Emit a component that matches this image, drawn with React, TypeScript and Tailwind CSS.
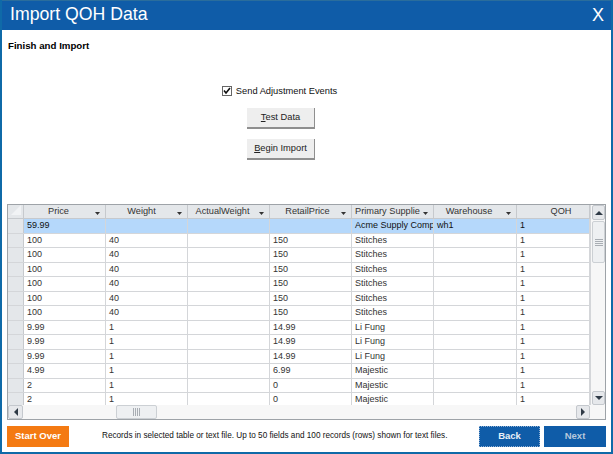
const columns = [
  { label: "Price", width: "w-[82px]", pad: "pr-[12px]", arrow: true },
  { label: "Weight", width: "w-[82px]", pad: "pr-[10px]", arrow: true },
  { label: "ActualWeight", width: "w-[82px]", pad: "pr-[12px]", arrow: true },
  { label: "RetailPrice", width: "w-[82px]", pad: "pr-[6px]", arrow: true },
  { label: "Primary Supplie", width: "w-[82px]", pad: "pr-[10px]", arrow: true },
  { label: "Warehouse", width: "w-[83px]", pad: "pr-[12px]", arrow: true },
  { label: "QOH", width: "w-[73px]", pad: "pl-[16px]", arrow: false },
];

const rows = [
  ["59.99", "", "", "", "Acme Supply Company", "wh1", "1"],
  ["100", "40", "", "150", "Stitches", "", "1"],
  ["100", "40", "", "150", "Stitches", "", "1"],
  ["100", "40", "", "150", "Stitches", "", "1"],
  ["100", "40", "", "150", "Stitches", "", "1"],
  ["100", "40", "", "150", "Stitches", "", "1"],
  ["100", "40", "", "150", "Stitches", "", "1"],
  ["9.99", "1", "", "14.99", "Li Fung", "", "1"],
  ["9.99", "1", "", "14.99", "Li Fung", "", "1"],
  ["9.99", "1", "", "14.99", "Li Fung", "", "1"],
  ["4.99", "1", "", "6.99", "Majestic", "", "1"],
  ["2", "1", "", "0", "Majestic", "", "1"],
  ["2", "1", "", "0", "Majestic", "", "1"],
];

function Caret() {
  return (
    <svg width="5" height="3" viewBox="0 0 5 3" className="absolute right-[5px] top-[7px]">
      <path d="M0 0h5L2.5 3z" fill="#333" />
    </svg>
  );
}

function ScrollButton({ dir, className }: { dir: "up" | "down" | "left" | "right"; className: string }) {
  const paths = {
    up: "M0 4L4 0L8 4z",
    down: "M0 0h8L4 4z",
    left: "M4 0v8L0 4z",
    right: "M0 0v8L4 4z",
  };
  return (
    <div
      className={`flex items-center justify-center rounded-[2px] border border-[#c4c8cd] bg-[#e6e8eb] ${className}`}
    >
      <svg width="8" height="8" viewBox="0 0 8 8">
        <path d={paths[dir]} fill="#2f3a46" transform={dir === "up" || dir === "down" ? "translate(0 2)" : "translate(2 0)"} />
      </svg>
    </div>
  );
}

function Grip({ vertical }: { vertical?: boolean }) {
  return (
    <div className={`flex ${vertical ? "flex-col gap-[1px]" : "gap-[1px]"}`}>
      {[0, 1, 2, 3].map((i) => (
        <div key={i} className={vertical ? "h-px w-[8px] bg-[#a8adb3]" : "h-[8px] w-px bg-[#a8adb3]"} />
      ))}
    </div>
  );
}

export default function App() {
  return (
    <div className="flex h-[454px] w-[613px] flex-col overflow-hidden border-x-2 border-b-2 border-[#0f6aa8] bg-white font-['Liberation_Sans',Arial,sans-serif]">
      <div className="flex h-[30px] shrink-0 items-center justify-between border-t border-[#2a6d9c] bg-[#0f5ca8] pb-[2px] pl-[8px] pr-[7px] text-white">
        <span className="text-[17.7px] leading-none">Import QOH Data</span>
        <span className="text-[18px] leading-none">X</span>
      </div>

      <div className="pl-[6px] pt-[10px] text-[9.7px] font-bold leading-[12px] text-black">Finish and Import</div>

      <div className="mt-[33px] flex flex-col items-center pr-[51px]">
        <label className="mr-[3px] flex items-center gap-[4px] text-[9.3px] leading-[12px] text-[#111]">
          <span className="flex h-[10px] w-[10px] items-center justify-center border border-[#666] bg-white">
            <svg width="8" height="8" viewBox="0 0 8 8">
              <path d="M1 3.5l2 2.5L7 1" fill="none" stroke="#111" strokeWidth="1.6" />
            </svg>
          </span>
          Send Adjustment Events
        </label>
        <button className="mt-[11px] h-[21px] w-[68px] border-r border-b-2 border-[#8f8f8f] bg-[#eeeeee] text-[9.3px] text-[#222]">
          <span className="underline">T</span>est Data
        </button>
        <button className="mt-[10px] h-[21px] w-[68px] border-r border-b-2 border-[#8f8f8f] bg-[#eeeeee] text-[9.3px] text-[#222]">
          <span className="underline">B</span>egin Import
        </button>
      </div>

      <div className="mx-[5px] mt-[44px] flex h-[216px] flex-col border border-[#9ea3a8]">
        <div className="flex min-h-0 flex-1">
          <div className="min-w-0 flex-1 overflow-hidden">
            <div className="flex h-[14px] border-b border-[#c6c9cd] bg-[#e4e7ea] text-[9.2px] leading-[13px] text-[#333]">
              <div className="relative w-[16px] shrink-0 border-r border-[#c6c9cd]">
                <svg width="10" height="10" viewBox="0 0 10 10" className="absolute left-[3px] top-0">
                  <path d="M10 0v10H0z" fill="#f1f3f5" />
                </svg>
              </div>
              {columns.map((c) => (
                <div key={c.label} className={`relative shrink-0 overflow-hidden whitespace-nowrap border-r border-[#c6c9cd] text-center ${c.width} ${c.pad}`}>
                  {c.label}
                  {c.arrow && <Caret />}
                </div>
              ))}
            </div>
            {rows.map((row, i) => (
              <div key={i} className={`flex h-[14.5px] border-b border-[#d4d6d9] text-[9px] leading-[13px] ${i === 0 ? "bg-[#b5d8fb] text-[#111]" : "bg-white text-[#333]"}`}>
                <div className="w-[16px] shrink-0 border-r border-[#c6c9cd] bg-[#e4e7ea]" />
                {row.map((cell, j) => (
                  <div key={j} className={`shrink-0 overflow-hidden whitespace-nowrap border-r border-[#d4d6d9] pl-[3px] ${columns[j].width}`}>
                    {cell}
                  </div>
                ))}
              </div>
            ))}
          </div>
          <div className="flex w-[15px] shrink-0 flex-col border-l border-[#d4d6d9] bg-[#f7f7f7] pl-[1px]">
            <ScrollButton dir="up" className="h-[15px] shrink-0" />
            <div className="mt-[1px] flex h-[42px] items-center justify-center rounded-[2px] border border-[#ccd0d4] bg-[#eef0f2]">
              <Grip vertical />
            </div>
            <div className="flex-1" />
            <ScrollButton dir="down" className="h-[14px] shrink-0" />
          </div>
        </div>
        <div className="flex h-[14px] shrink-0 items-stretch bg-[#f7f7f7] pr-[15px]">
          <ScrollButton dir="left" className="w-[15px]" />
          <div className="ml-[93px] flex w-[41px] items-center justify-center rounded-[2px] border border-[#ccd0d4] bg-[#eef0f2]">
            <Grip />
          </div>
          <div className="flex-1" />
          <ScrollButton dir="right" className="w-[14px]" />
        </div>
      </div>

      <div className="mt-[6px] flex items-center pl-[5px] pr-[5px]">
        <button className="h-[21px] w-[62px] bg-[#f47a12] text-[9.5px] font-bold text-white">Start Over</button>
        <div className="ml-[33px] flex-1 text-[8.2px] leading-none text-[#111]">
          Records in selected table or text file. Up to 50 fields and 100 records (rows) shown for text files.
        </div>
        <div className="flex gap-[4px]">
          <button className="h-[21px] w-[61px] border border-dotted border-[#8fb0d4] bg-[#0f5ca8] text-[9.5px] font-bold text-[#e8eff7]">Back</button>
          <button className="h-[21px] w-[62px] bg-[#0f5ca8] text-[9.5px] font-bold text-[#b6c8dc]">Next</button>
        </div>
      </div>
    </div>
  );
}
